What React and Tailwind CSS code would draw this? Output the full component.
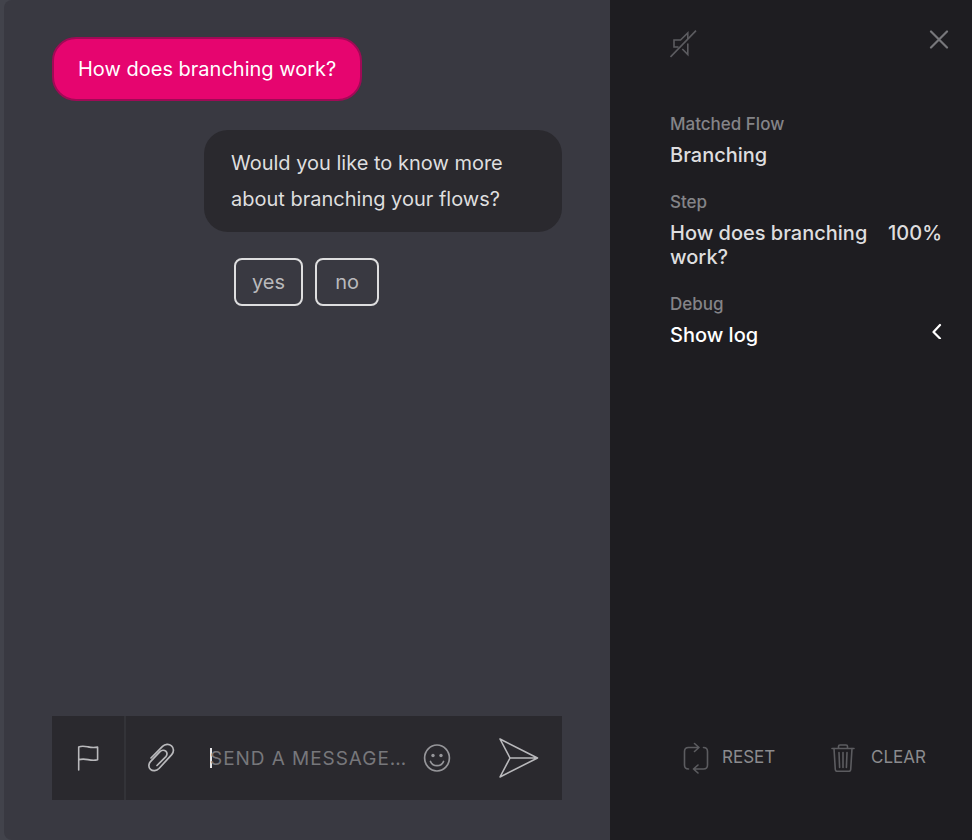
import React, { useState } from 'react';

const FlagIcon = () => (
  <svg className="w-6 h-7" viewBox="0 0 24 28" fill="none" stroke="currentColor" strokeWidth="1.6" strokeLinecap="round" strokeLinejoin="round">
    <path d="M2.7 26V3C6 1.6 9 2.3 12 2.9s6 .9 9.6.2v12.6c-3.600 1-6.600.5-9.600-.1s-6-1-9.300.2" />
  </svg>
);

const ClipIcon = () => (
  <svg className="w-7 h-8" viewBox="0 0 28 32" fill="none" stroke="currentColor" strokeWidth="1.7" strokeLinecap="round" strokeLinejoin="round">
    <path d="M4 16 15.500 4.300c2.600-2.500 6.500-2.700 9-.5s2.600 6.200.2 8.800L12 26.500c-2.500 2.500-6.200 2.900-8.500.8s-2.100-5.500.2-8L13 9.600c1.600-1.600 4.200-1.800 5.800-.4s1.600 3.700.1 5.400L10 23.500" />
  </svg>
);

const SmileIcon = () => (
  <svg className="w-7 h-7" viewBox="0 0 28 28" fill="none" stroke="currentColor" strokeWidth="1.7" strokeLinecap="round">
    <ellipse cx="14" cy="14" rx="12.4" ry="13" />
    <path d="M7.500 17.500c1.200 2.700 3.600 4.200 6.500 4.200s5.300-1.500 6.500-4.200" />
    <circle cx="10" cy="11.5" r="1.7" fill="currentColor" stroke="none" />
    <circle cx="18" cy="11.5" r="1.7" fill="currentColor" stroke="none" />
  </svg>
);

const SendIcon = () => (
  <svg className="w-10 h-10" viewBox="0 0 40 40" fill="none" stroke="currentColor" strokeWidth="1.6" strokeLinejoin="round">
    <path d="M1 1 38.500 20 1 39l10-19L1 1ZM11 20h27" />
  </svg>
);

const MuteIcon = () => (
  <svg className="w-7 h-7" viewBox="0 0 28 28" fill="none" stroke="currentColor" strokeWidth="1.6">
    <path d="M.5 27 26 .6" />
    <path d="M8.500 17H4v-7h6.500L17.800 3v6M17.800 13.500v11L12.300 19" />
  </svg>
);

const CloseIcon = () => (
  <svg className="w-5 h-5" viewBox="0 0 20 20" fill="none" stroke="currentColor" strokeWidth="2.2" strokeLinecap="round">
    <path d="M2 1.500l16 16M18 1.500l-16 16" />
  </svg>
);

const ChevronIcon = () => (
  <svg className="w-3 h-4" viewBox="0 0 12 16" fill="none" stroke="currentColor" strokeWidth="2.2" strokeLinecap="round" strokeLinejoin="round">
    <path d="M10 2 3.500 9l6.500 6.500" />
  </svg>
);

const ResetIcon = () => (
  <svg className="w-7 h-8" viewBox="0 0 28 32" fill="none" stroke="currentColor" strokeWidth="1.6" strokeLinecap="round" strokeLinejoin="round">
    <path d="M6.500 27C3.700 27 2.500 25.600 2.500 23V9.500c0-2.700 1.300-4 4-4H17M12.500 1.500l4.500 4-4.500 4" />
    <path d="M21.500 5.500c2.700 0 4 1.300 4 4V23c0 2.700-1.300 4-4 4H11.500M16 23l-4.500 4 4.500 4" />
  </svg>
);

const TrashIcon = () => (
  <svg className="w-6 h-7" viewBox="0 0 24 28" fill="none" stroke="currentColor" strokeWidth="1.6" strokeLinecap="round" strokeLinejoin="round">
    <path d="M1 4.500h22M7.500 4V2.500C7.500 1.500 8 1 9 1h6c1 0 1.500.5 1.500 1.500V4" />
    <path d="M3 4.500l1.300 21c.1 1.300.7 1.800 1.900 1.800h11.600c1.200 0 1.800-.5 1.900-1.800L21 4.500" />
    <path d="M8 8.500l.6 15M12 8.500v15M16 8.500l-.6 15" />
  </svg>
);

const InfoBlock = ({ label, children }) => (
  <div>
    <dt className="text-[17px] leading-6 font-medium text-[#848488]">{label}</dt>
    <dd className="mt-[7px] text-xl leading-6 font-medium text-[#dededf]">{children}</dd>
  </div>
);

const App = () => {
  const [message, setMessage] = useState('');

  return (
    <div className="min-h-screen flex bg-[#42434b] font-['Inter',sans-serif]">
      <main className="flex-1 min-w-0 ml-1 px-12 pt-[37px] pb-10 flex flex-col bg-[#393941] rounded-l-lg">
        <div className="self-start px-6 py-3 rounded-3xl border-2 border-[#a00a56] bg-[#e6056f] text-xl leading-9 text-white">
          How does branching work?
        </div>

        <div className="self-end w-[358px] max-w-full mt-[29px] px-[27px] py-[15px] rounded-3xl bg-[#2a292e] text-xl leading-9 text-[#dededf]">
          Would you like to know more about branching your flows?
        </div>

        <div className="self-end w-[328px] max-w-full mt-[26px] flex gap-3">
          <button type="button" className="h-12 min-w-16 px-4 rounded-lg border-2 border-[#dededf] text-xl text-[#b9b9bc]">
            yes
          </button>
          <button type="button" className="h-12 min-w-16 px-4 rounded-lg border-2 border-[#dededf] text-xl text-[#b9b9bc]">
            no
          </button>
        </div>

        <form onSubmit={(e) => e.preventDefault()} className="mt-auto h-[84px] flex items-center bg-[#2a292e] text-[#b9b9bc]">
          <button type="button" aria-label="Flag" className="w-[74px] h-full flex items-center justify-center border-r-2 border-[#333338]">
            <FlagIcon />
          </button>
          <button type="button" aria-label="Attach file" className="ml-[21px] mr-[35px]">
            <ClipIcon />
          </button>
          {message === '' && <span className="w-0.5 h-5 -mr-0.5 bg-[#e6e6e8]" />}
          <input
            type="text"
            aria-label="Message"
            placeholder="SEND A MESSAGE…"
            value={message}
            onChange={(e) => setMessage(e.target.value)}
            className="flex-1 min-w-0 h-12 text-[19px] tracking-wider text-[#dededf] placeholder:text-[#77777b] outline-none"
          />
          <button type="button" aria-label="Emoji" className="text-[#96969a]">
            <SmileIcon />
          </button>
          <button type="submit" aria-label="Send" className="ml-12 mr-[23px]">
            <SendIcon />
          </button>
        </form>
      </main>

      <aside className="w-[362px] shrink-0 pl-[60px] pr-[30px] pt-[30px] pb-[66px] flex flex-col bg-[#1e1d21]">
        <div className="flex justify-between items-start text-[#5c5c60]">
          <button type="button" aria-label="Unmute">
            <MuteIcon />
          </button>
          <button type="button" aria-label="Close" className="-mr-[7px] text-[#77777b]">
            <CloseIcon />
          </button>
        </div>

        <dl className="mt-[54px] flex flex-col gap-[23px]">
          <InfoBlock label="Matched Flow">Branching</InfoBlock>
          <InfoBlock label="Step">
            <div className="flex justify-between gap-4">
              <span>How does branching work?</span>
              <span>100%</span>
            </div>
          </InfoBlock>
          <InfoBlock label="Debug">
            <button type="button" className="w-full flex items-start justify-between text-white">
              Show log
              <ChevronIcon />
            </button>
          </InfoBlock>
        </dl>

        <div className="mt-auto flex justify-between pl-3 pr-4 text-[17px] text-[#8b8b8e]">
          <button type="button" className="flex items-center gap-3">
            <span className="text-[#5c5c60]"><ResetIcon /></span>
            RESET
          </button>
          <button type="button" className="flex items-center gap-4">
            <span className="text-[#5c5c60]"><TrashIcon /></span>
            CLEAR
          </button>
        </div>
      </aside>
    </div>
  );
};

export default App;
